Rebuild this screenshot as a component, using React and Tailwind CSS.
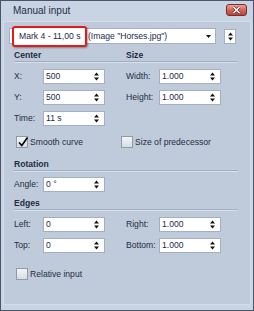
function Spin() {
    return (
        <svg width="5" height="9" viewBox="0 0 5 9" className="shrink-0">
            <polygon points="0,3.5 2.5,0.5 5,3.5" fill="#111" />
            <polygon points="0,5.5 2.5,8.5 5,5.5" fill="#111" />
        </svg>
    )
}

function NumBox({ value }) {
    return (
        <div className="h-[15px] w-[62px] bg-white border border-[#a4b0c0] flex items-center justify-between pl-[2px] pr-[5px] text-[#1b2a50] leading-none">
            <span>{value}</span>
            <Spin />
        </div>
    )
}

function Field({ label, value, labelW }) {
    return (
        <div className="flex items-center">
            <span className={labelW + ' text-[#1f2d40]'}>{label}</span>
            <NumBox value={value} />
        </div>
    )
}

function Check({ checked, label }) {
    return (
        <div className="flex items-center gap-[2px]">
            <div className="relative w-[12px] h-[12px] border border-[#8e9aab] bg-gradient-to-b from-[#f5f5f5] to-[#d9dde2]">
                {checked && (
                    <svg width="12" height="12" viewBox="0 0 12 12" className="absolute left-[0px] top-[-1px]">
                        <path d="M2 6.5 L4.8 9.5 L10.5 1.5" stroke="#000" strokeWidth="1.6" fill="none" />
                    </svg>
                )}
            </div>
            <span className="text-[#1f2d40]">{label}</span>
        </div>
    )
}

function Header({ children }) {
    return (
        <div className="ml-[10px] mr-[12px] h-[13px] flex border-b border-[#a2afc1] shadow-[0_1px_0_#d6dfea]">
            {children}
        </div>
    )
}

export default function App() {
    return (
        <div className="w-[254px] h-[311px] bg-[#c8d4e3] border border-[#4a5566] flex flex-col font-['Liberation_Sans',Arial,sans-serif] text-[8.6px] overflow-hidden">
            <div className="h-[20px] flex items-center justify-between pl-[12px] pr-[6px] shrink-0">
                <span className="text-[10px] text-[#1e2f48] mt-[-1px]">Manual input</span>
                <div className="w-[21px] h-[12px] mt-[-2px] rounded-[3px] border border-[#7b2c2a] bg-gradient-to-b from-[#e8a898] via-[#d06658] to-[#b8433a] flex items-center justify-center">
                    <svg width="9" height="8" viewBox="0 0 9 8">
                        <path d="M1.5 1 L7.5 7 M7.5 1 L1.5 7" stroke="#5a1f1c" strokeWidth="2.6" />
                        <path d="M1.5 1 L7.5 7 M7.5 1 L1.5 7" stroke="#fff" strokeWidth="1.5" />
                    </svg>
                </div>
            </div>
            <div className="flex-1 mx-[2px] mb-[5px] bg-[#bfcbdb] border border-[#d3dce8] flex flex-col">
                <div className="mt-[6px] ml-[5px] flex items-center">
                    <div className="h-[16px] w-[207px] bg-white border border-[#a4b0c0] flex items-center pl-[2px] pr-[4px] text-[#1b2a50]">
                        <div className="shrink-0 w-[75px] h-[21px] border-2 border-[#e51a1a] rounded-[3px] bg-white flex items-center pl-[5px] shadow-[1px_1px_2px_rgba(0,0,0,0.35)]">
                            <span>Mark 4 - 11,00 s</span>
                        </div>
                        <span className="ml-[1px] flex-1 whitespace-nowrap">(Image "Horses.jpg")</span>
                        <svg width="5" height="3" viewBox="0 0 5 3">
                            <polygon points="0,0 5,0 2.5,3" fill="#111" />
                        </svg>
                    </div>
                    <div className="ml-[8px] h-[15px] w-[12px] bg-white border border-[#a4b0c0] flex items-center justify-center">
                        <Spin />
                    </div>
                </div>

                <div className="mt-[5px]">
                    <Header>
                        <span className="w-[112px] font-bold text-[#1f2d40] leading-[12px]">Center</span>
                        <span className="font-bold text-[#1f2d40] leading-[12px]">Size</span>
                    </Header>
                </div>

                <div className="mt-[7px] ml-[10px] flex">
                    <div className="w-[112px] flex flex-col gap-[6px]">
                        <Field label="X:" value="500" labelW="w-[29px]" />
                        <Field label="Y:" value="500" labelW="w-[29px]" />
                        <Field label="Time:" value="11 s" labelW="w-[29px]" />
                    </div>
                    <div className="flex flex-col gap-[6px]">
                        <Field label="Width:" value="1.000" labelW="w-[33px]" />
                        <Field label="Height:" value="1.000" labelW="w-[33px]" />
                    </div>
                </div>

                <div className="mt-[10px] ml-[12px] flex">
                    <div className="w-[105px]">
                        <Check checked label="Smooth curve" />
                    </div>
                    <Check label="Size of predecessor" />
                </div>

                <div className="mt-[9px]">
                    <Header>
                        <span className="font-bold text-[#1f2d40] leading-[12px]">Rotation</span>
                    </Header>
                </div>

                <div className="mt-[6px] ml-[10px]">
                    <Field label="Angle:" value="0 °" labelW="w-[29px]" />
                </div>

                <div className="mt-[5px]">
                    <Header>
                        <span className="font-bold text-[#1f2d40] leading-[12px]">Edges</span>
                    </Header>
                </div>

                <div className="mt-[7px] ml-[10px] flex">
                    <div className="w-[112px] flex flex-col gap-[6px]">
                        <Field label="Left:" value="0" labelW="w-[29px]" />
                        <Field label="Top:" value="0" labelW="w-[29px]" />
                    </div>
                    <div className="flex flex-col gap-[6px]">
                        <Field label="Right:" value="1.000" labelW="w-[33px]" />
                        <Field label="Bottom:" value="1.000" labelW="w-[33px]" />
                    </div>
                </div>

                <div className="mt-[15px] ml-[12px]">
                    <Check label="Relative input" />
                </div>
            </div>
        </div>
    )
}
